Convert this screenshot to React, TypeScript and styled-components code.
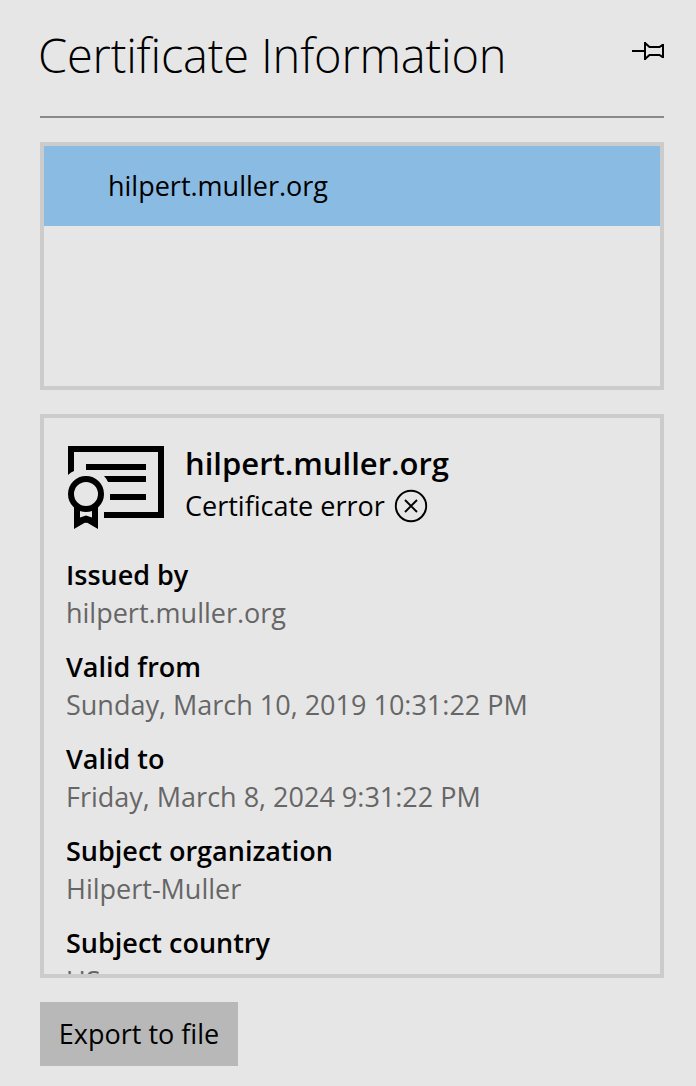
import React from 'react';
import styled, { createGlobalStyle } from 'styled-components';

const GlobalStyle = createGlobalStyle`
  * { box-sizing: border-box; }
  body { margin: 0; background: #e6e6e6; }
`;

const Panel = styled.main`
  display: flex;
  flex-direction: column;
  gap: 24px;
  height: 1086px;
  padding: 0 32px 20px 40px;
  overflow: hidden;
  background: #e6e6e6;
  color: #000;
  font: 400 27px/38px "Open Sans", "Noto Sans", sans-serif;
  white-space: nowrap;
`;

const Header = styled.header`
  display: flex;
  justify-content: space-between;
  align-items: flex-start;
  flex: none;
  height: 118px;
  border-bottom: 2px solid #8a8a8a;
`;

const Title = styled.h1`
  margin: 23px 0 0 -2px;
  font-size: 47px;
  font-weight: 300;
  line-height: 64px;
  letter-spacing: -0.2px;
`;

const PinButton = styled.button`
  display: flex;
  margin: 40px -1px 0 0;
  padding: 0;
  border: 0;
  background: none;
`;

const Box = styled.section<{ $height: number }>`
  flex: none;
  height: ${(p) => p.$height}px;
  border: 4px solid #cccccc;
  overflow: hidden;
`;

const SelectedRow = styled.div`
  height: 80px;
  padding-left: 64px;
  background: #8abbe2;
  line-height: 80px;
`;

const Details = styled(Box)`
  padding: 28px 22px 0;
`;

const Summary = styled.div`
  display: flex;
  height: 110px;
  padding-left: 2px;
`;

const SummaryText = styled.div`
  margin: -4px 0 0 21px;
`;

const Name = styled.h2`
  margin: 0;
  font-size: 31px;
  font-weight: 600;
  line-height: 42px;
`;

const Status = styled.div`
  display: flex;
  align-items: center;
  gap: 9px;
  height: 44px;
`;

const Field = styled.div`
  height: 92px;
`;

const Text = styled.span<{ $spacing: number }>`
  letter-spacing: ${(p) => p.$spacing}px;
`;

const Label = styled.div<{ $spacing: number }>`
  font-weight: 600;
  letter-spacing: ${(p) => p.$spacing}px;
`;

const Value = styled.div<{ $spacing: number }>`
  color: #666;
  letter-spacing: ${(p) => p.$spacing}px;
`;

const ExportButton = styled.button`
  align-self: flex-start;
  width: 198px;
  height: 64px;
  padding: 0;
  border: 0;
  background: #b8b8b8;
  color: #000;
  font: inherit;
`;

const PinIcon = () => (
  <svg width="33" height="22" viewBox="0 0 33 22" fill="none" stroke="#000" strokeWidth="2">
    <path d="M0 11H13M13 2V20M13.3 3.2L17.5 7H27.5L31 4.7M13.3 18.8L17.5 15H27.5L31 17.3M31 4V18" />
  </svg>
);

const CertificateIcon = () => (
  <svg width="96" height="84" viewBox="0 0 96 84">
    <path d="M0 0H96V72H36V66H90V6H6V25Q3 26 0 29Z" />
    <path d="M18 18H78V24H18ZM36 30H78V36H40Q38 32 36 30ZM42 48H78V54H42Z" />
    <circle cx="18" cy="48" r="15" fill="none" stroke="#000" strokeWidth="6" />
    <path d="M6 60H12V73L18 70L24 73V60H30V83L18 76L6 83Z" />
    <path d="M12 71.5L18 69.5L24 71.5V74L18 77L12 74Z" />
  </svg>
);

const ErrorIcon = () => (
  <svg width="34" height="34" viewBox="0 0 34 34" fill="none" stroke="#000" strokeWidth="1.9">
    <circle cx="17" cy="17" r="15.2" />
    <path d="M11 11L23 23M23 11L11 23" />
  </svg>
);

const fields = [
  { label: 'Issued by', value: 'hilpert.muller.org', ls: 0, vs: 0 },
  { label: 'Valid from', value: 'Sunday, March 10, 2019 10:31:22 PM', ls: 0, vs: 0 },
  { label: 'Valid to', value: 'Friday, March 8, 2024 9:31:22 PM', ls: 0, vs: 0 },
  { label: 'Subject organization', value: 'Hilpert-Muller', ls: 0, vs: 0 },
  { label: 'Subject country', value: 'US', ls: 0, vs: 0 },
];

export default function App() {
  return (
    <>
      <GlobalStyle />
      <Panel>
        <Header>
          <Title>Certificate Information</Title>
          <PinButton aria-label="Pin"><PinIcon /></PinButton>
        </Header>
        <Box $height={248}>
          <SelectedRow><Text $spacing={0}>hilpert.muller.org</Text></SelectedRow>
        </Box>
        <Details $height={564}>
          <Summary>
            <CertificateIcon />
            <SummaryText>
              <Name>hilpert.muller.org</Name>
              <Status><Text $spacing={0}>Certificate error</Text><ErrorIcon /></Status>
            </SummaryText>
          </Summary>
          {fields.map((f) => (
            <Field key={f.label}>
              <Label $spacing={f.ls}>{f.label}</Label>
              <Value $spacing={f.vs}>{f.value}</Value>
            </Field>
          ))}
        </Details>
        <ExportButton><Text $spacing={0}>Export to file</Text></ExportButton>
      </Panel>
    </>
  );
}
